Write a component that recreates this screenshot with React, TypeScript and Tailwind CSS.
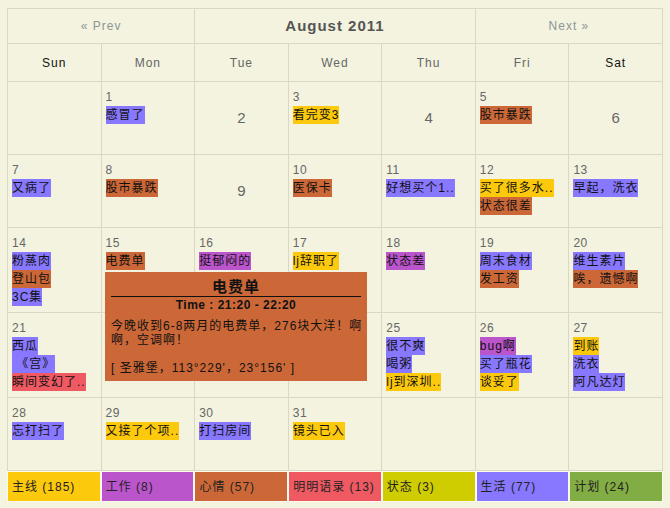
import React from "react";

type Ev = [string, string];
type Cell = { d: number; ev: Ev[] } | null;

const B = "bg-[#8877ff]";
const Y = "bg-[#fdc90c]";
const O = "bg-[#cc6838]";
const P = "bg-[#bb55cc]";
const R = "bg-[#ef5a62]";

const cells: Cell[] = [
  null,
  { d: 1, ev: [["感冒了", B]] },
  { d: 2, ev: [] },
  { d: 3, ev: [["看完变3", Y]] },
  { d: 4, ev: [] },
  { d: 5, ev: [["股市暴跌", O]] },
  { d: 6, ev: [] },
  { d: 7, ev: [["又病了", B]] },
  { d: 8, ev: [["股市暴跌", O]] },
  { d: 9, ev: [] },
  { d: 10, ev: [["医保卡", O]] },
  { d: 11, ev: [["好想买个1..", B]] },
  { d: 12, ev: [["买了很多水..", Y], ["状态很差", O]] },
  { d: 13, ev: [["早起，洗衣", B]] },
  { d: 14, ev: [["粉蒸肉", B], ["登山包", O], ["3C集", B]] },
  { d: 15, ev: [["电费单", O]] },
  { d: 16, ev: [["挺郁闷的", P]] },
  { d: 17, ev: [["lj辞职了", Y]] },
  { d: 18, ev: [["状态差", P]] },
  { d: 19, ev: [["周末食材", B], ["发工资", O]] },
  { d: 20, ev: [["维生素片", B], ["唉，遗憾啊", O]] },
  { d: 21, ev: [["西瓜", B], [" 《宫》", B], ["瞬间变幻了..", R]] },
  null,
  null,
  null,
  { d: 25, ev: [["很不爽", B], ["喝粥", B], ["lj到深圳..", Y]] },
  { d: 26, ev: [["bug啊", P], ["买了瓶花", B], ["谈妥了", Y]] },
  { d: 27, ev: [["到账", Y], ["洗衣", B], ["阿凡达灯", B]] },
  { d: 28, ev: [["忘打扫了", B]] },
  { d: 29, ev: [["又接了个项..", Y]] },
  { d: 30, ev: [["打扫房间", B]] },
  { d: 31, ev: [["镜头已入", Y]] },
  null,
  null,
  null,
];

const days = ["Sun", "Mon", "Tue", "Wed", "Thu", "Fri", "Sat"];

const legend: [string, string][] = [
  ["主线 (185)", "bg-[#fdc90c]"],
  ["工作 (8)", "bg-[#bb55cc]"],
  ["心情 (57)", "bg-[#cc6838]"],
  ["明明语录 (13)", "bg-[#ef5a62]"],
  ["状态 (3)", "bg-[#cfcc00]"],
  ["生活 (77)", "bg-[#8877ff]"],
  ["计划 (24)", "bg-[#82ad44]"],
];

export default function App() {
  return (
    <div className="relative w-[670px] h-[508px] bg-[#f3f3df] pt-[8px] px-[7px] font-['Liberation_Sans','Noto_Sans_CJK_SC',sans-serif] text-[12px]">
      <div className="grid grid-cols-7 border-r border-b border-[#d9d9c3]">
        <div className="col-span-2 h-[35px] border-l border-t border-[#d9d9c3] flex items-center justify-center text-[#8d9797] tracking-[1px]">
          « Prev
        </div>
        <div className="col-span-3 h-[35px] border-l border-t border-[#d9d9c3] flex items-center justify-center text-[#555555] font-bold text-[15px] tracking-[1px]">
          August 2011
        </div>
        <div className="col-span-2 h-[35px] border-l border-t border-[#d9d9c3] flex items-center justify-center text-[#8d9797] tracking-[1px]">
          Next »
        </div>
        {days.map((d, i) => (
          <div
            key={d}
            className={
              "h-[38px] border-l border-t border-[#d9d9c3] flex items-center justify-center tracking-[1px] " +
              (i === 0 || i === 6 ? "text-[#111111]" : "text-[#666666]")
            }
          >
            {d}
          </div>
        ))}
        {cells.map((c, i) => {
          if (!c)
            return <div key={i} className="min-h-[73px] border-l border-t border-[#d9d9c3]" />;
          if (c.ev.length === 0)
            return (
              <div
                key={i}
                className="min-h-[73px] border-l border-t border-[#d9d9c3] flex items-center justify-center text-[15px] text-[#666666]"
              >
                {c.d}
              </div>
            );
          return (
            <div key={i} className="min-h-[73px] border-l border-t border-[#d9d9c3] pl-[4px] pt-[6px] pb-[6px]">
              <div className="leading-[18px] text-[#666666] tracking-[0.5px]">{c.d}</div>
              {c.ev.map(([t, col], j) => (
                <div
                  key={j}
                  className={"w-fit leading-[18px] whitespace-pre tracking-[1px] text-[#111111] " + col}
                >
                  {t}
                </div>
              ))}
            </div>
          );
        })}
      </div>
      <div className="grid grid-cols-7">
        {legend.map(([t, col]) => (
          <div
            key={t}
            className={"h-[31px] border border-[#fafaee] flex items-center pl-[4px] tracking-[1px] text-[#222222] " + col}
          >
            {t}
          </div>
        ))}
      </div>

      <div className="absolute left-[105px] top-[272px] w-[262px] bg-[#cc6838] px-[6px] pt-[6px] pb-[6px] text-[#111111]">
        <div className="h-[19px] border-b border-[#111111] flex items-center justify-center font-bold text-[15px] tracking-[1px]">
          电费单
        </div>
        <div className="leading-[16px] text-center font-bold tracking-[0.5px]">Time : 21:20 - 22:20</div>
        <div className="mt-[6px] leading-[14px] tracking-[1px] whitespace-nowrap">
          <div>今晚收到6-8两月的电费单，276块大洋！啊</div>
          <div>啊，空调啊！</div>
          <div>&nbsp;</div>
          <div>[ 圣雅堡，113°229'，23°156' ]</div>
        </div>
      </div>
    </div>
  );
}
